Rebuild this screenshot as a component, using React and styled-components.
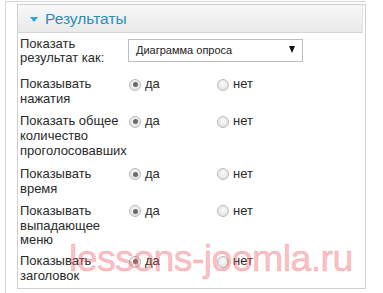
import React from "react";
import styled, { createGlobalStyle } from "styled-components";

const Global = createGlobalStyle`
  html, body { margin: 0; padding: 0; background: #fff; }
  body { font-family: "Liberation Sans", Arial, sans-serif; width: 383px; height: 293px; overflow: hidden; }
`;

const Page = styled.div`
  position: relative;
  width: 383px;
  height: 293px;
  overflow: hidden;
`;

const Frame = styled.div`
  margin: 1px 0 0 5px;
  width: 361px;
  height: 300px;
  border-left: 1px solid #d6d6d6;
  border-top: 1px solid #d6d6d6;
  box-sizing: border-box;
  padding: 2px 0 0 11px;
`;

const Panel = styled.div`
  width: 349px;
  box-sizing: border-box;
  border: 1px solid #cfcfcf;
  background: #fff;
`;

const Header = styled.div`
  height: 28px;
  box-sizing: border-box;
  display: flex;
  align-items: center;
  gap: 7px;
  padding: 0 0 0 12px;
  background: linear-gradient(#f8f8f8, #e9e9e9);
  border-bottom: 1px solid #d4d4d4;
  margin-right: 2px;
  border-right: 1px solid #e2e2e2;
`;

const Caret = styled.span`
  width: 0;
  height: 0;
  border-left: 4px solid transparent;
  border-right: 4px solid transparent;
  border-top: 5px solid #2aa6d9;
  margin-top: 1px;
`;

const Title = styled.span`
  font-size: 15.5px;
  color: #2b8db6;
  line-height: 1;
`;

const Body = styled.div`
  padding: 3px 0 4px 2px;
  display: flex;
  flex-direction: column;
`;

const Row = styled.div`
  display: flex;
  align-items: flex-start;
  padding-top: 0.5px;
  margin-bottom: ${(p) => p.$gap}px;
`;

const Label = styled.div`
  width: 108px;
  font-size: 13px;
  line-height: 14.7px;
  color: #2a2a2a;
`;

const Select = styled.div`
  margin-top: 2px;
  width: 175px;
  height: 23px;
  box-sizing: border-box;
  border: 1px solid #bdbdbd;
  background: #fff;
  display: flex;
  align-items: center;
  justify-content: space-between;
  padding: 0 7px 0 7px;
  font-size: 11px;
  color: #222;
`;

const Arrow = styled.span`
  width: 0;
  height: 0;
  border-left: 3px solid transparent;
  border-right: 3px solid transparent;
  border-top: 7px solid #111;
  margin-top: -2px;
`;

const Options = styled.div`
  display: flex;
`;

const Option = styled.div`
  width: 88px;
  display: flex;
  align-items: center;
  gap: 4px;
  font-size: 13px;
  line-height: 14.7px;
  color: #2a2a2a;
`;

const Radio = styled.span`
  width: 12px;
  height: 12px;
  box-sizing: border-box;
  border-radius: 50%;
  border: 1px solid #b9b9b9;
  background: radial-gradient(circle at 50% 40%, #fafafa, #dcdcdc);
  display: flex;
  align-items: center;
  justify-content: center;
  margin-left: 1px;
  &::after {
    content: "";
    width: 5px;
    height: 5px;
    border-radius: 50%;
    background: ${(p) => (p.$checked ? "#6a6a6a" : "transparent")};
  }
`;

const Watermark = styled.div`
  position: absolute;
  left: 69px;
  top: 239px;
  font-size: 37.5px;
  line-height: 38px;
  letter-spacing: -0.6px;
  color: rgba(244, 90, 100, 0.38);
  -webkit-text-stroke: 0.6px rgba(244, 90, 100, 0.38);
  pointer-events: none;
  white-space: nowrap;
  font-family: "Liberation Sans", Arial, sans-serif;
`;

const rows = [
  { label: ["Показывать", "нажатия"], gap: 7 },
  { label: ["Показать общее", "количество", "проголосовавших"], gap: 8 },
  { label: ["Показывать", "время"], gap: 7 },
  { label: ["Показывать", "выпадающее", "меню"], gap: 6 },
  { label: ["Показывать", "заголовок"], gap: 0 },
];

const Lines = ({ lines }) =>
  lines.map((l, i) => (
    <React.Fragment key={i}>
      {l}
      {i < lines.length - 1 && <br />}
    </React.Fragment>
  ));

export default function App() {
  return (
    <Page>
      <Global />
      <Frame>
        <Panel>
          <Header>
            <Caret />
            <Title>Результаты</Title>
          </Header>
          <Body>
            <Row $gap={11}>
              <Label>
                <Lines lines={["Показать", "результат как:"]} />
              </Label>
              <Select>
                <span>Диаграмма опроса</span>
                <Arrow />
              </Select>
            </Row>
            {rows.map((r, i) => (
              <Row key={i} $gap={r.gap}>
                <Label>
                  <Lines lines={r.label} />
                </Label>
                <Options>
                  <Option>
                    <Radio $checked />
                    да
                  </Option>
                  <Option>
                    <Radio />
                    нет
                  </Option>
                </Options>
              </Row>
            ))}
          </Body>
        </Panel>
      </Frame>
      <Watermark>lessons-joomla.ru</Watermark>
    </Page>
  );
}
